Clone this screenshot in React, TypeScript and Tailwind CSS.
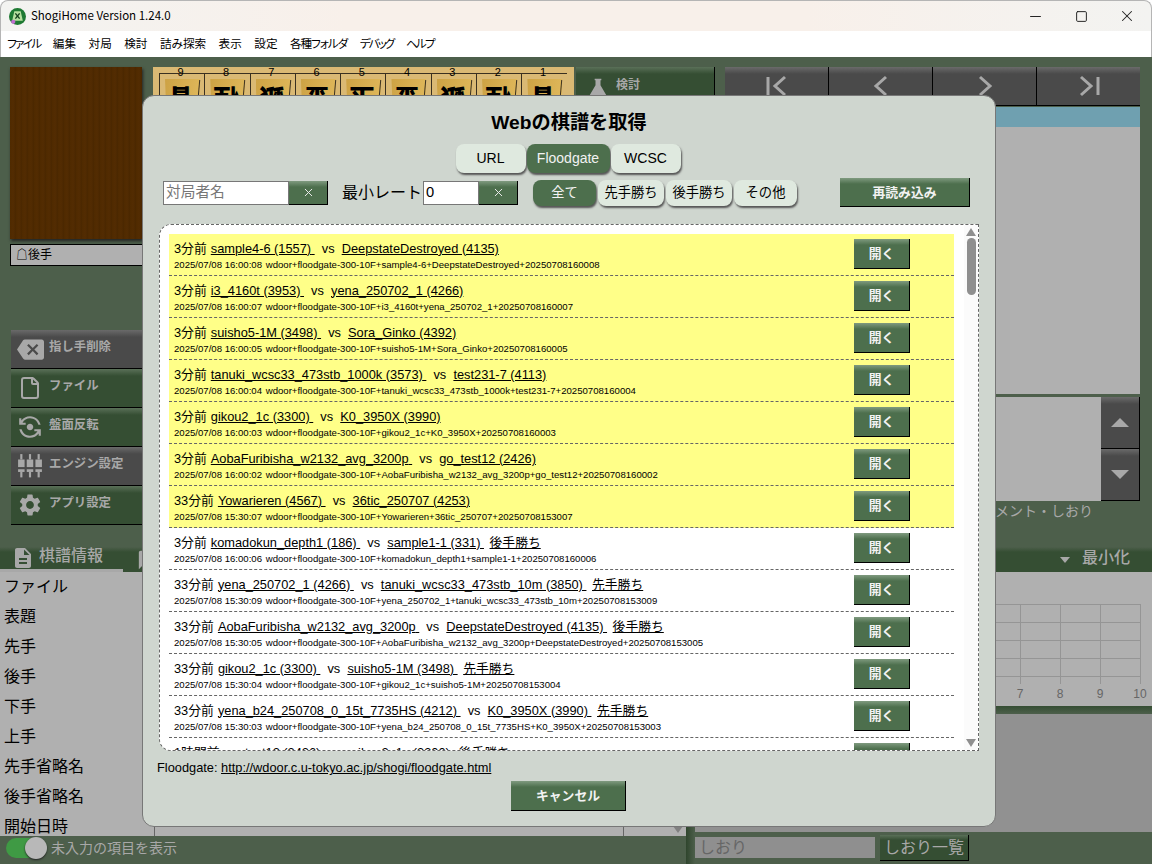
import React from "react";
import { MdBackspace, MdFlipCameraAndroid, MdSettings, MdDescription, MdChatBubble } from "react-icons/md";
import { File, X, Minus, Square } from "lucide-react";

const SANS = "font-['Liberation_Sans','Noto_Sans_CJK_JP',sans-serif]";

type Row = { t: string; a: string; b: string; r?: string; d: string; id: string; y?: boolean };

const rows: Row[] = [
  { t: "3分前", a: "sample4-6 (1557)", b: "DeepstateDestroyed (4135)", d: "2025/07/08 16:00:08", id: "wdoor+floodgate-300-10F+sample4-6+DeepstateDestroyed+20250708160008", y: true },
  { t: "3分前", a: "i3_4160t (3953)", b: "yena_250702_1 (4266)", d: "2025/07/08 16:00:07", id: "wdoor+floodgate-300-10F+i3_4160t+yena_250702_1+20250708160007", y: true },
  { t: "3分前", a: "suisho5-1M (3498)", b: "Sora_Ginko (4392)", d: "2025/07/08 16:00:05", id: "wdoor+floodgate-300-10F+suisho5-1M+Sora_Ginko+20250708160005", y: true },
  { t: "3分前", a: "tanuki_wcsc33_473stb_1000k (3573)", b: "test231-7 (4113)", d: "2025/07/08 16:00:04", id: "wdoor+floodgate-300-10F+tanuki_wcsc33_473stb_1000k+test231-7+20250708160004", y: true },
  { t: "3分前", a: "gikou2_1c (3300)", b: "K0_3950X (3990)", d: "2025/07/08 16:00:03", id: "wdoor+floodgate-300-10F+gikou2_1c+K0_3950X+20250708160003", y: true },
  { t: "3分前", a: "AobaFuribisha_w2132_avg_3200p", b: "go_test12 (2426)", d: "2025/07/08 16:00:02", id: "wdoor+floodgate-300-10F+AobaFuribisha_w2132_avg_3200p+go_test12+20250708160002", y: true },
  { t: "33分前", a: "Yowarieren (4567)", b: "36tic_250707 (4253)", d: "2025/07/08 15:30:07", id: "wdoor+floodgate-300-10F+Yowarieren+36tic_250707+20250708153007", y: true },
  { t: "3分前", a: "komadokun_depth1 (186)", b: "sample1-1 (331)", r: "後手勝ち", d: "2025/07/08 16:00:06", id: "wdoor+floodgate-300-10F+komadokun_depth1+sample1-1+20250708160006" },
  { t: "33分前", a: "yena_250702_1 (4266)", b: "tanuki_wcsc33_473stb_10m (3850)", r: "先手勝ち", d: "2025/07/08 15:30:09", id: "wdoor+floodgate-300-10F+yena_250702_1+tanuki_wcsc33_473stb_10m+20250708153009" },
  { t: "33分前", a: "AobaFuribisha_w2132_avg_3200p", b: "DeepstateDestroyed (4135)", r: "後手勝ち", d: "2025/07/08 15:30:05", id: "wdoor+floodgate-300-10F+AobaFuribisha_w2132_avg_3200p+DeepstateDestroyed+20250708153005" },
  { t: "33分前", a: "gikou2_1c (3300)", b: "suisho5-1M (3498)", r: "先手勝ち", d: "2025/07/08 15:30:04", id: "wdoor+floodgate-300-10F+gikou2_1c+suisho5-1M+20250708153004" },
  { t: "33分前", a: "yena_b24_250708_0_15t_7735HS (4212)", b: "K0_3950X (3990)", r: "先手勝ち", d: "2025/07/08 15:30:03", id: "wdoor+floodgate-300-10F+yena_b24_250708_0_15t_7735HS+K0_3950X+20250708153003" },
  { t: "1時間前", a: "go_test12 (2426)", b: "gikou2_1c (3300)", r: "後手勝ち", d: "2025/07/08 15:00:03", id: "wdoor+floodgate-300-10F+go_test12+gikou2_1c+20250708150003" },
];

const menu: { s: string; c: string }[] = [
  { s: "ファイル", c: "tracking-[-1.7px]" },
  { s: "編集", c: "" },
  { s: "対局", c: "" },
  { s: "検討", c: "" },
  { s: "詰み探索", c: "" },
  { s: "表示", c: "" },
  { s: "設定", c: "" },
  { s: "各種フォルダ", c: "tracking-[-1px]" },
  { s: "デバッグ", c: "tracking-[-2px]" },
  { s: "ヘルプ", c: "tracking-[-1.7px]" },
];

function GreenBtn({ children, className }: { children: React.ReactNode; className: string }) {
  return (
    <button className={`flex items-center justify-center pt-px bg-[linear-gradient(#7f9a7f_0px,#4d6f4d_6px,#4d6f4d_100%)] text-[#f2f2f2] border-r border-b border-black ${className}`}>
      {children}
    </button>
  );
}

function Pill({ children, active, className }: { children: React.ReactNode; active?: boolean; className: string }) {
  return (
    <button className={`flex items-center justify-center rounded-[8px] shadow-[1px_2px_2px_#555] ${active ? "bg-[#4d6f4d] text-[#f2f2f2]" : "bg-[#dfe9df] text-black"} ${className}`}>
      {children}
    </button>
  );
}

function EngineIcon() {
  return (
    <svg width="26" height="26" viewBox="0 0 24 24" fill="#a8a8a8">
      {[1, 9, 17].map((x) => (
        <g key={x}>
          <rect x={x + 2} y="1" width="2" height="5" />
          <rect x={x} y="6" width="6" height="7" />
          <rect x={x} y="15" width="6" height="2.5" />
          <rect x={x + 2} y="17.5" width="2" height="5" />
        </g>
      ))}
    </svg>
  );
}

function SideBtn({ icon, label, dark }: { icon: React.ReactNode; label: string; dark?: boolean }) {
  return (
    <button className={`flex items-center w-[131px] h-[39px] border-b border-black text-left ${dark ? "bg-[linear-gradient(#6a6a6a_0px,#4a4a4a_7px,#4a4a4a_100%)]" : "bg-[linear-gradient(#5a7058_0px,#354e33_7px,#354e33_100%)]"}`}>
      <span className="w-[38px] flex justify-center shrink-0">{icon}</span>
      <span className="text-[12.4px] font-bold text-[#a8a8a8] pb-[3px]">{label}</span>
    </button>
  );
}

function NavBtn({ children, border = true }: { children: React.ReactNode; border?: boolean }) {
  return (
    <button className={`flex-1 h-full flex items-center justify-center bg-[linear-gradient(#6a6a6a_0px,#4a4a4a_7px,#4a4a4a_100%)] border-b border-black ${border ? "border-r" : ""}`}>
      {children}
    </button>
  );
}

function Piece({ k }: { k: string }) {
  return (
    <div className="relative w-[45.3px] h-[34px] border-l border-t border-[#3a3020] shrink-0 overflow-hidden">
      <div className="absolute left-[5px] top-[5px] w-[35px] h-[34px] bg-[linear-gradient(100deg,#cda244,#e0b95c)] [clip-path:polygon(0_0,100%_0,96%_100%,4%_100%)]" />
      <div className="absolute left-[38px] top-[6px] w-px h-[28px] bg-[#3a3020] rotate-[5deg]" />
      <span className="absolute left-[5px] top-[11px] w-[32px] text-center rotate-180 text-[25px] leading-[30px] font-black text-black font-['Noto_Sans_CJK_JP',sans-serif]">{k}</span>
    </div>
  );
}

function Background() {
  const top = ["香", "桂", "銀", "金", "玉", "金", "銀", "桂", "香"];
  return (
    <div className={`flex-1 flex flex-col min-h-0 bg-[#4d5f4b] ${SANS}`}>
      <div className="h-[490px] flex shrink-0">
        {/* left stand */}
        <div className="w-[139px] pt-[10px] pl-[10px] flex flex-col shrink-0">
          <div className="w-[132px] h-[172px] bg-[repeating-linear-gradient(90deg,#4f2a00_0px,#532c02_3px,#4a2700_6px)] shadow-[1px_2px_3px_#222]" />
          <div className="mt-[5px] w-[140px] h-[22px] bg-[#b0b0b0] border border-black flex items-center pl-[5px] text-[12px] text-black">☖後手</div>
          <div className="mt-[64px] flex flex-col pl-px">
            <SideBtn dark label="指し手削除" icon={<MdBackspace size={27} color="#a8a8a8" />} />
            <SideBtn label="ファイル" icon={<File size={24} color="#a8a8a8" />} />
            <SideBtn label="盤面反転" icon={<MdFlipCameraAndroid size={26} color="#a8a8a8" />} />
            <SideBtn dark label="エンジン設定" icon={<EngineIcon />} />
            <SideBtn label="アプリ設定" icon={<MdSettings size={26} color="#a8a8a8" />} />
          </div>
        </div>
        {/* board */}
        <div className="w-[437px] pt-[10px] pl-[14px] shrink-0">
          <div className="relative w-[421px] h-[40px] bg-[#dab974] overflow-hidden pl-[6px] pt-[6px]">
            <div className="absolute left-[5px] top-0 flex h-[10px] items-center text-[11px] leading-[10px] text-black z-10">
              {[9, 8, 7, 6, 5, 4, 3, 2, 1].map((n) => (
                <span key={n} className="w-[45.3px] text-center shrink-0">{n}</span>
              ))}
            </div>
            <div className="flex">
              {top.map((k, i) => (
                <Piece key={i} k={k} />
              ))}
            </div>
          </div>
        </div>
        {/* tabs */}
        <div className="w-[139px] pt-[10px] shrink-0">
          <div className="h-[40px] flex items-center border-r border-black bg-[linear-gradient(#5a7058_0px,#354e33_7px,#354e33_100%)] pl-[12px] gap-[8px]">
            <svg width="20" height="22" viewBox="0 0 24 24" fill="#a8a8a8"><path d="M8 2h8v2h-1v6l7 12H2l7-12V4H8z" /></svg>
            <span className="text-[12px] font-bold text-[#a8a8a8] pb-[4px]">検討</span>
          </div>
        </div>
        {/* right */}
        <div className="ml-[10px] w-[415px] pt-[10px] flex flex-col shrink-0">
          <div className="h-[39px] flex shrink-0">
            <NavBtn>
              <svg width="24" height="24" viewBox="0 0 24 24" fill="none" stroke="#a8a8a8" strokeWidth="3"><path d="M3 3v18M20 3L10 12l10 9" /></svg>
            </NavBtn>
            <NavBtn>
              <svg width="24" height="24" viewBox="0 0 24 24" fill="none" stroke="#a8a8a8" strokeWidth="3"><path d="M17 3L7 12l10 9" /></svg>
            </NavBtn>
            <NavBtn>
              <svg width="24" height="24" viewBox="0 0 24 24" fill="none" stroke="#a8a8a8" strokeWidth="3"><path d="M7 3l10 9-10 9" /></svg>
            </NavBtn>
            <NavBtn border={false}>
              <svg width="24" height="24" viewBox="0 0 24 24" fill="none" stroke="#a8a8a8" strokeWidth="3"><path d="M4 3l10 9-10 9M21 3v18" /></svg>
            </NavBtn>
          </div>
          <div className="mt-px h-[20px] bg-[#6fa0b0] shrink-0" />
          <div className="h-[267px] bg-[#b0b0b0] shrink-0" />
          <div className="mt-[3px] h-[104px] flex shrink-0">
            <div className="flex-1 bg-[#b0b0b0]" />
            <div className="w-[39px] flex flex-col border-r border-black">
              <button className="h-[52px] flex items-center justify-center bg-[linear-gradient(#6a6a6a_0px,#4a4a4a_7px,#4a4a4a_100%)] border-b border-black">
                <span className="w-0 h-0 border-x-[9px] border-x-transparent border-b-[9px] border-b-[#a8a8a8]" />
              </button>
              <button className="h-[52px] flex items-center justify-center bg-[linear-gradient(#6a6a6a_0px,#4a4a4a_7px,#4a4a4a_100%)] border-b border-black">
                <span className="w-0 h-0 border-x-[9px] border-x-transparent border-t-[9px] border-t-[#a8a8a8]" />
              </button>
            </div>
          </div>
          <div className="flex justify-end pr-[47px] text-[14px] leading-[21px] text-[#a8a8a8]">コメント・しおり</div>
        </div>
      </div>
      {/* bottom */}
      <div className="flex-1 flex min-h-0">
        <div className="w-[686px] flex flex-col shrink-0">
          <div className="h-[25px] bg-[linear-gradient(#4d5f4b_0px,#354e33_5px)] flex items-center shrink-0">
            <div className="w-[123px] h-full border-b-[3px] border-[#a8a8a8] flex items-center pl-[11px] gap-[4px] pb-[1px]">
              <MdDescription size={24} color="#a8a8a8" />
              <span className="text-[16px] font-medium text-[#a8a8a8] pb-[3px]">棋譜情報</span>
            </div>
            <div className="pl-[14px] flex items-center">
              <MdChatBubble size={22} color="#a8a8a8" />
            </div>
          </div>
          <div className="relative flex-1 min-h-0 overflow-hidden bg-[#b0b0b0] flex flex-col pl-[4px] text-[16px] leading-[30px] text-black">
            {["ファイル", "表題", "先手", "後手", "下手", "上手", "先手省略名", "後手省略名", "開始日時"].map((s) => (
              <div key={s} className="h-[30px] shrink-0">{s}</div>
            ))}
            <span className="absolute left-[154px] top-0 bottom-0 w-px bg-[#666]" />
            <span className="absolute left-[623px] top-0 bottom-0 w-px bg-[#666]" />
            <span className="absolute right-[3px] bottom-[3px] w-0 h-0 border-x-[5px] border-x-transparent border-t-[7px] border-t-[#808080]" />
          </div>
          <div className="h-[28px] flex items-center pl-[6px] pb-[4px] gap-[4px] shrink-0">
            <div className="relative w-[41px] h-[20px] rounded-full bg-[#3f9a44]">
              <span className="absolute right-0 -top-[1px] w-[22px] h-[22px] rounded-full bg-[#b8b8b8] shadow-[0_1px_2px_#222]" />
            </div>
            <span className="text-[14px] text-[#a8a8a8]">未入力の項目を表示</span>
          </div>
        </div>
        <div className="w-[9px] bg-[linear-gradient(90deg,#2f452d,#4d5f4b)] shrink-0" />
        <div className="flex-1 flex flex-col min-w-0">
          <div className="h-[25px] shrink-0 bg-[linear-gradient(#4d5f4b_0px,#354e33_5px)] flex items-center justify-end pr-[22px] gap-[12px]">
            <span className="w-0 h-0 border-x-[5px] border-x-transparent border-t-[6px] border-t-[#a8a8a8]" />
            <span className="text-[16px] font-medium text-[#a8a8a8] pb-[4px]">最小化</span>
          </div>
          <div className="h-[134px] bg-[#b0b0b0] shrink-0">
            <svg width="457" height="134" className="block">
              {[32, 50, 68, 86, 104].map((y) => (
                <line key={y} x1="8" x2="445" y1={y + 0.5} y2={y + 0.5} stroke="#959595" strokeWidth="1" />
              ))}
              {[325, 365, 405, 445].map((x) => (
                <line key={x} x1={x + 0.5} x2={x + 0.5} y1="32" y2="112" stroke="#959595" strokeWidth="1" />
              ))}
              {[[325, "7"], [365, "8"], [405, "9"], [445, "10"]].map(([x, l]) => (
                <text key={l as string} x={x as number} y="126" fontSize="12" textAnchor="middle" fill="#666" fontFamily="Liberation Sans">{l}</text>
              ))}
            </svg>
          </div>
          <div className="h-[8px] shrink-0 bg-[linear-gradient(#354e33,#4d5f4b)]" />
          <div className="flex-1 bg-[#919191]" />
          <div className="h-[32px] flex items-center gap-[5px] shrink-0 pb-[1px]">
            <div className="w-[180px] h-[21px] bg-[#8f8f8f] text-[16px] text-[#666] flex items-center pl-[4px]">しおり</div>
            <button className="w-[89px] h-[26px] pt-px bg-[linear-gradient(#5a7058_0px,#354e33_5px)] text-[#a8a8a8] text-[16px] leading-none whitespace-nowrap border-r border-b border-black">しおり一覧</button>
          </div>
        </div>
      </div>
    </div>
  );
}

function Dialog() {
  return (
    <div className={`absolute left-[142px] top-[95px] w-[854px] h-[732px] rounded-[12px] bg-[#cfd6cf] border border-[#777] flex flex-col text-black ${SANS}`}>
      <h1 className="mt-[14px] h-[26px] text-center text-[19.2px] leading-[26px] font-bold">Webの棋譜を取得</h1>
      <div className="mt-[8px] flex justify-center text-[14px] pr-[2px]">
        <Pill className="w-[70px] h-[29px]">URL</Pill>
        <Pill active className="ml-px w-[83px] h-[29px]">Floodgate</Pill>
        <Pill className="ml-px w-[70px] h-[29px]">WCSC</Pill>
      </div>
      <div className="mt-[5px] h-[29px] flex items-center pl-[20px] shrink-0">
        <div className="w-[126px] h-[24px] bg-white border border-[#777] flex items-center pl-[2px] text-[14.7px] text-[#777]">対局者名</div>
        <GreenBtn className="w-[39px] h-[24px]"><X size={13} color="#eee" strokeWidth={1.8} /></GreenBtn>
        <span className="ml-[14px] w-[81px] text-[16px] leading-[24px] whitespace-nowrap">最小レート</span>
        <div className="w-[56px] h-[24px] bg-white border border-[#777] flex items-center pl-[2px] text-[14.7px]">0</div>
        <GreenBtn className="w-[39px] h-[24px]"><X size={13} color="#eee" strokeWidth={1.8} /></GreenBtn>
        <div className="ml-[15px] flex gap-[2px] text-[13.3px]">
          <Pill active className="w-[63px] h-[26px]">全て</Pill>
          <Pill className="w-[66px] h-[26px]">先手勝ち</Pill>
          <Pill className="w-[66px] h-[26px]">後手勝ち</Pill>
          <Pill className="w-[63px] h-[26px]">その他</Pill>
        </div>
        <GreenBtn className="ml-[43px] w-[130px] h-[29px] text-[12.8px] font-bold">再読み込み</GreenBtn>
      </div>
      <div className="mt-[17px] ml-[16px] w-[820px] h-[527px] shrink-0 bg-white border border-dashed border-[#666] rounded-l-[12px] flex overflow-hidden">
        <div className="w-[804px] shrink-0 overflow-hidden pl-[9px] pr-[10px] pt-[9px]">
          {rows.map((r, i) => (
            <div key={i} className={`w-[785px] h-[42px] shrink-0 flex items-center border-b border-dashed border-[#666] ${r.y ? "bg-[#ffff88]" : "bg-white"}`}>
              <div className="w-[685px] pl-[5px] shrink-0 pt-[2px]">
                <div className="text-[12.8px] leading-[18px] whitespace-pre">
                  <span className="mr-[0.5px]">{r.t} </span>
                  <span className="underline">{r.a} </span>
                  {"  vs  "}
                  <span className="underline">{r.r ? `${r.b} ` : r.b}</span>
                  {r.r ? <span className="ml-[2px]"> <span className="underline">{r.r}</span></span> : null}
                </div>
                <div className="text-[9.6px] leading-[14px] whitespace-pre">
                  <span className="mr-px">{r.d} </span>{r.id}
                </div>
              </div>
              <GreenBtn className="w-[56px] h-[30px] text-[12.8px] font-bold shrink-0 mb-[2px]">開く</GreenBtn>
            </div>
          ))}
        </div>
        <div className="flex-1 flex flex-col items-center bg-[#fbfbfb] pt-[3px] pb-[3px]">
          <span className="w-0 h-0 border-x-[5px] border-x-transparent border-b-[8px] border-b-[#8f8f8f]" />
          <span className="mt-[2px] w-[9px] h-[57px] rounded-full bg-[#8f8f8f]" />
          <span className="mt-auto w-0 h-0 border-x-[5px] border-x-transparent border-t-[8px] border-t-[#8f8f8f]" />
        </div>
      </div>
      <div className="mt-[9px] ml-[14px] text-[12.8px] leading-[16px] whitespace-pre">
        {"Floodgate: "}<span className="underline">http://wdoor.c.u-tokyo.ac.jp/shogi/floodgate.html</span>
      </div>
      <div className="mt-[5px] flex justify-center pr-[1px]">
        <GreenBtn className="w-[115px] h-[30px] text-[12.8px] font-bold">キャンセル</GreenBtn>
      </div>
    </div>
  );
}

export default function App() {
  return (
    <div className={`relative w-[1152px] h-[864px] overflow-hidden flex flex-col bg-white ${SANS}`}>
      <div className="h-[31px] flex items-center bg-[linear-gradient(90deg,#f3f3f1,#f8f0ea_30%,#f8f0ea_70%,#f3f3f1)] rounded-t-[8px] border-t border-x border-[#b5b5b5] shrink-0">
        <svg width="17" height="17" viewBox="0 0 16 16" className="ml-[8px]">
          <circle cx="8" cy="8" r="8" fill="#1f7a33" />
          <path d="M5 3h6l2 9H3z" fill="#b7e0a0" />
          <path d="M6 5l4 5M10 5l-4 5" stroke="#14401c" strokeWidth="1.3" />
          <circle cx="4" cy="13" r="2" fill="#c070d0" />
        </svg>
        <span className="ml-[5px] text-[11.5px] text-black font-['Noto_Sans_CJK_JP',sans-serif]">ShogiHome Version 1.24.0</span>
        <div className="ml-auto flex items-center mr-px">
          <span className="w-[46px] flex justify-center"><Minus size={17} color="#222" strokeWidth={1.4} /></span>
          <span className="w-[46px] flex justify-center"><Square size={13} color="#222" strokeWidth={1.8} /></span>
          <span className="w-[46px] flex justify-center"><X size={18} color="#222" strokeWidth={1.4} /></span>
        </div>
      </div>
      <div className="h-[26px] flex items-center pl-[6px] gap-[12.5px] bg-white text-[11.6px] text-black shrink-0 border-x border-[#b5b5b5] [font-feature-settings:'palt'] font-['Noto_Sans_CJK_JP',sans-serif]">
        {menu.map((m) => (
          <span key={m.s} className={m.c}>{m.s}</span>
        ))}
      </div>
      <Background />
      <Dialog />
    </div>
  );
}
